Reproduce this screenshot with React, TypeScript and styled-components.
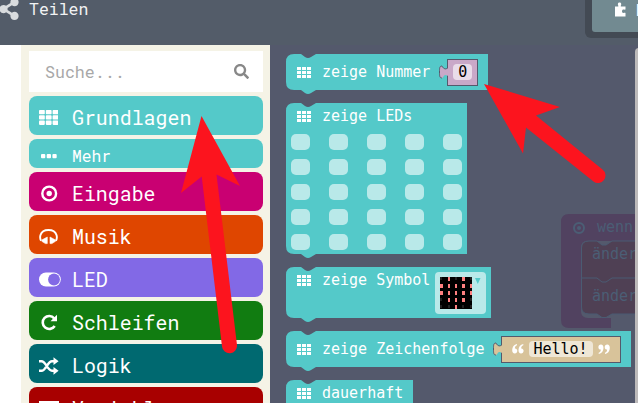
import React from 'react';
import styled, { createGlobalStyle } from 'styled-components';
import { FaShareAlt, FaSearch } from 'react-icons/fa';

const mono = '"DejaVu Sans Mono", "Liberation Mono", monospace';
const uiMono = '"Roboto Mono", "DejaVu Sans Mono", monospace';
const teal = '#54c9c9';

const GlobalStyle = createGlobalStyle`
  * { box-sizing: border-box; }
  body { margin: 0; overflow: hidden; background: #fff; }
  svg { display: block; }
`;

const Page = styled.div`
  position: relative;
  width: 638px;
  height: 403px;
  overflow: hidden;
  display: flex;
  flex-direction: column;
`;

const Header = styled.header`
  height: 45px;
  flex: none;
  display: flex;
  justify-content: space-between;
  align-items: flex-start;
  background: #535c69;
  color: #e2e4e7;
  overflow: hidden;
`;

const ShareButton = styled.div`
  display: flex;
  align-items: center;
  gap: 9px;
  height: 18px;
  font: 16.5px/18px ${uiMono};
  color: #f2f3f4;
  svg { margin-left: -2px; color: #d9dcde; }
`;

const EditorToggle = styled.div`
  width: 53px;
  height: 38px;
  padding: 0 0 6px 7px;
  background: #434a54;
  border-bottom-left-radius: 6px;
`;

const ToggleItem = styled.div`
  height: 32px;
  display: flex;
  gap: 9px;
  padding: 1px 0 0 22px;
  background: #728a91;
  border-bottom-left-radius: 3px;
  color: #fff;
  overflow: hidden;
  font: bold 17px/17px ${uiMono};
  svg { flex: none; margin-top: 1px; }
`;

const Main = styled.main`
  flex: 1;
  min-height: 0;
  display: flex;
  padding-left: 21px;
`;

const Toolbox = styled.nav`
  width: 249px;
  flex: none;
  display: flex;
  flex-direction: column;
  gap: 4px;
  padding: 6px 7px 0 8px;
  background: #f5f3e6;
  overflow: hidden;
`;

const SearchField = styled.div`
  height: 41px;
  flex: none;
  display: flex;
  align-items: center;
  justify-content: space-between;
  padding: 0 14px 0 16px;
  background: #fff;
  color: #a8a8a8;
  font: 16.6px/20px ${uiMono};
  svg { color: #888; }
`;

const Category = styled.div<{ $color: string; $small?: boolean }>`
  height: ${p => (p.$small ? 29 : 39)}px;
  flex: none;
  display: flex;
  align-items: center;
  padding-top: ${p => (p.$small ? 4 : 3)}px;
  border-radius: 8px;
  background: ${p => p.$color};
  color: #fff;
  font: ${p => (p.$small ? 16.3 : 19.9)}px/24px ${uiMono};
`;

const CategoryIcon = styled.span`
  width: 43px;
  flex: none;
  display: flex;
  padding: 1px 0 0 10px;
`;

const Workspace = styled.section`
  position: relative;
  flex: 1;
  background: #54596c;
  overflow: hidden;
`;

const Flyout = styled.div`
  position: relative;
  display: flex;
  flex-direction: column;
  align-items: flex-start;
  gap: 13px;
  padding: 9px 0 0 16px;
`;

const BlockBody = styled.div<{ $w: number; $h: number }>`
  position: relative;
  width: ${p => p.$w}px;
  height: ${p => p.$h}px;
  flex: none;
`;

const BlockShape = styled.svg`
  position: absolute;
  inset: 0;
  overflow: visible;
`;

const BlockRow = styled.div<{ $h: number }>`
  position: relative;
  height: ${p => p.$h}px;
  padding-left: 11px;
  display: flex;
  align-items: center;
  color: #fff;
  font: 15px/20px ${mono};
  white-space: pre;
`;

const BlockLabel = styled.span`
  margin-left: 11px;
`;

const ValueInput = styled.div<{ $gap: number }>`
  display: flex;
  align-items: center;
  margin-left: ${p => p.$gap}px;
`;

const ValueTab = styled.svg`
  position: relative;
  z-index: 1;
  margin-right: -1px;
`;

const ValueBox = styled.div<{ $w: number; $color: string }>`
  width: ${p => p.$w}px;
  height: 27px;
  display: flex;
  align-items: center;
  justify-content: center;
  gap: 5px;
  border: 1px solid #54596c;
  background: ${p => p.$color};
`;

const Field = styled.span<{ $w: number }>`
  width: ${p => p.$w}px;
  height: 16px;
  border-radius: 4px;
  background: rgba(255, 255, 255, 0.6);
  color: #000;
  text-align: center;
  line-height: 17px;
`;

const LedGrid = styled.div`
  position: relative;
  display: grid;
  grid-template-columns: repeat(5, 19px);
  grid-auto-rows: 16px;
  gap: 9px 19px;
  padding: 5px 0 0 5px;
`;

const Led = styled.i`
  border-radius: 5px;
  background: #b9e9e9;
`;

const SymbolField = styled.div`
  align-self: flex-start;
  width: 51px;
  height: 42px;
  display: flex;
  gap: 3px;
  margin: 5px 0 0 5px;
  padding: 5px;
  border-radius: 4px;
  background: #b9e9e9;
`;

const SymbolRow = styled(BlockRow)`
  align-items: flex-start;
  > svg { margin-top: 8px; }
  ${BlockLabel} { margin-top: 3px; }
`;

const GhostBlock = styled.div`
  position: absolute;
  left: 291px;
  top: 169px;
  width: 80px;
  height: 120px;
  color: #4b5e75;
  font: 15px/20px ${mono};
`;

const GhostLines = styled.div`
  position: relative;
  display: flex;
  flex-direction: column;
  padding: 3px 0 0 31px;
`;

const GhostLine = styled.div<{ $indent?: number; $gap?: number }>`
  padding-left: ${p => p.$indent || 0}px;
  margin-top: ${p => p.$gap || 0}px;
  white-space: pre;
`;

const Scrollbar = styled.div`
  position: absolute;
  left: 365px;
  top: 3px;
  width: 8px;
  height: 380px;
  border-radius: 4px 4px 0 0;
  background: #bdbaba;
`;

const Arrows = styled.svg`
  position: absolute;
  inset: 0;
  pointer-events: none;
`;

const GridIcon = ({ w, h, gap, r = 0 }: { w: number; h: number; gap: number; r?: number }) => (
  <svg width={w * 3 + gap * 2} height={h * 3 + gap * 2} fill="#fff">
    {[0, 1, 2].flatMap(y => [0, 1, 2].map(x => (
      <rect key={`${x}-${y}`} x={x * (w + gap)} y={y * (h + gap)} width={w} height={h} rx={r} />
    )))}
  </svg>
);

const DotsIcon = () => (
  <svg width="18" height="5" fill="#fff">
    {[2, 7.7, 13.4].map(x => <rect key={x} x={x} width="4.3" height="4.3" rx="1" />)}
  </svg>
);

const PuzzleIcon = () => (
  <svg width="13" height="15" viewBox="0 0 13 15">
    <path d="M1 4.500H4.300C4.600 3.500 3.600 3 3.900 1.700C4.200 .2 6.900 .2 7.200 1.700C7.500 3 6.500 3.500 6.800 4.500H11.500V7.500C10.500 8 9.500 7 8.600 7.800C7.800 8.500 7.800 10 8.600 10.700C9.500 11.400 10.500 10.300 11.500 10.900V14.500H1Z" fill="#fff" />
  </svg>
);

const TargetIcon = () => (
  <svg width="19" height="17" viewBox="0 0 19 17">
    <circle cx="10.200" cy="8.500" r="6.900" fill="none" stroke="#fff" strokeWidth="2.400" />
    <circle cx="10.200" cy="8.500" r="2.700" fill="#fff" />
  </svg>
);

const ToggleIcon = () => (
  <svg width="22" height="15" viewBox="0 0 22 15">
    <rect x="0" y=".6" width="21.800" height="13.800" rx="6.900" fill="#fff" />
    <circle cx="15" cy="7.500" r="5.900" fill="#8269e6" />
  </svg>
);

const HeadphonesIcon = () => (
  <svg width="19" height="17" viewBox="0 0 19 17">
    <path d="M2 12.800C.8 10.500 1.200 8 1.500 7C3.500 .3 15.500 .3 17.500 7C17.800 8 18.200 10.500 17 12.800" fill="none" stroke="#fff" strokeWidth="1.900" />
    <path d="M8.300 9V15.600H6.400L2.800 13.300V12zM11 9V15.600H12.900L16.500 13.300V12z" fill="#fff" strokeLinejoin="round" stroke="#fff" strokeWidth=".6" />
  </svg>
);

const RepeatIcon = () => (
  <svg width="20" height="17" viewBox="0 0 20 17">
    <path d="M15.200 4.300A6.500 6.500 0 1 0 15.700 12" fill="none" stroke="#fff" strokeWidth="2.600" />
    <path d="M18 .8v6.500h-6.500z" fill="#fff" />
  </svg>
);

const ShuffleIcon = () => (
  <svg width="20" height="18" viewBox="0 0 20 18">
    <path d="M0 4.200H2.500C6.800 4.200 8.600 13.800 13 13.800H15.500M0 13.800H2.500C6.800 13.800 8.600 4.200 13 4.200H15.500" fill="none" stroke="#fff" strokeWidth="2.400" />
    <path d="M14.500 .3L19.600 4.200L14.500 8.100ZM14.500 9.900L19.600 13.800L14.500 17.700Z" fill="#fff" />
  </svg>
);

const ListIcon = () => (
  <svg width="20" height="16" fill="#fff">
    <path d="M0 0h20v3H0zM0 6h20v3H0zM0 12h20v3H0z" />
  </svg>
);

const QuoteIcon = ({ close }: { close?: boolean }) => (
  <svg width="12" height="10" viewBox="0 0 12 10">
    <g fill="#fff" transform={close ? 'rotate(180 6 5)' : undefined}>
      <path d="M5 0V1.200C3.500 1.800 2.800 3 2.900 4.400C4.300 4.300 5.300 5.300 5.300 6.800C5.300 8.400 4.300 9.500 2.800 9.500C1 9.500 .2 8 .2 6C.2 3 2 .6 5 0Z" />
      <path d="M11.300 0V1.200C9.800 1.800 9.100 3 9.200 4.400C10.600 4.300 11.600 5.300 11.600 6.800C11.600 8.400 10.600 9.500 9.100 9.500C7.300 9.500 6.500 8 6.500 6C6.500 3 8.300 .6 11.300 0Z" />
    </g>
  </svg>
);

const blockPath = (w: number, h: number) =>
  `M0 8Q0 0 8 0H15L19 3Q22 5 25 3L30 0H${w}V${h}H30L25 ${h + 3}Q22 ${h + 5} 19 ${h + 3}L15 ${h}H8Q0 ${h} 0 ${h - 8}Z`;

const Block = ({ w, h, children }: { w: number; h: number; children: React.ReactNode }) => (
  <BlockBody $w={w} $h={h}>
    <BlockShape width={w} height={h}><path d={blockPath(w, h)} fill={teal} /></BlockShape>
    {children}
  </BlockBody>
);

const BlockIcon = () => <GridIcon w={4} h={3} gap={1} />;

const Tab = ({ color }: { color: string }) => (
  <ValueTab width="9" height="16" viewBox="0 0 9 16">
    <path d="M9 4C6 7 4 4 3 2C.5 2 .5 4 .5 8S.5 14 3 14C5 14 4 9 9 12Z" fill={color} />
    <path d="M8.5 4C6 6 4 4 3 2C.5 2 .5 4 .5 8S.5 14 3 14" fill="none" stroke="#54596c" />
  </ValueTab>
);

const heart = ['.#.#.', '#####', '#####', '.###.', '..#..'];
const columns = [0, 8, 15, 22, 30];

const SymbolPreview = () => (
  <svg width="32" height="32">
    <rect width="32" height="32" fill="#000" />
    {heart.flatMap((row, y) => row.split('').map((c, x) => {
      const lit = c === '#';
      const width = x === 0 || x === 3 ? 3 : 2;
      return <rect key={`${x}-${y}`} x={columns[x]} y={y * 7} width={lit ? width : 2} height={lit ? 4 : 3} fill={lit ? '#ff8080' : '#202020'} />;
    }))}
  </svg>
);

const categories = [
  { name: 'Eingabe', color: '#c90072', icon: <TargetIcon /> },
  { name: 'Musik', color: '#df4600', icon: <HeadphonesIcon /> },
  { name: 'LED', color: '#8269e6', icon: <ToggleIcon /> },
  { name: 'Schleifen', color: '#117c11', icon: <RepeatIcon /> },
  { name: 'Logik', color: '#006970', icon: <ShuffleIcon /> },
  { name: 'Variablen', color: '#a80000', icon: <ListIcon /> },
];

export default function App() {
  return (
    <Page>
      <GlobalStyle />
      <Header>
        <ShareButton><FaShareAlt size={22} />Teilen</ShareButton>
        <EditorToggle><ToggleItem><PuzzleIcon />Blöcke</ToggleItem></EditorToggle>
      </Header>
      <Main>
        <Toolbox>
          <SearchField>Suche...<FaSearch size={15} /></SearchField>
          <Category $color={teal}><CategoryIcon><GridIcon w={5.8} h={4.3} gap={1} r={0.8} /></CategoryIcon>Grundlagen</Category>
          <Category $color={teal} $small><CategoryIcon><DotsIcon /></CategoryIcon>Mehr</Category>
          {categories.map(c => (
            <Category key={c.name} $color={c.color}><CategoryIcon>{c.icon}</CategoryIcon>{c.name}</Category>
          ))}
        </Toolbox>
        <Workspace>
          <GhostBlock>
            <BlockShape width="80" height="120">
              <path d="M0 8Q0 0 8 0H80V27H26Q20 27 20 34V97Q20 104 27 104H50V114H8Q0 114 0 106Z" fill="#514260" />
              <path d="M20.5 34Q20.5 27 28 27H36L41 31H45L51 27H80V100H51L45 103.500H41L36 100H28Q20.500 100 20.500 93Z" fill="#4f4054" stroke="#4b5b72" />
              <path d="M20 64H36L41 68H45L51 64H80" fill="none" stroke="#4b5b72" />
              <circle cx="18" cy="14" r="5" fill="none" stroke="#4b5e75" strokeWidth="2" />
              <circle cx="18" cy="14" r="2" fill="#4b5e75" />
            </BlockShape>
            <GhostLines>
              <GhostLine $indent={5}>wenn</GhostLine>
              <GhostLine $gap={7}>änder</GhostLine>
              <GhostLine $gap={22}>änder</GhostLine>
            </GhostLines>
          </GhostBlock>
          <Flyout>
            <Block w={202} h={36}>
              <BlockRow $h={36}>
                <BlockIcon /><BlockLabel>zeige Nummer</BlockLabel>
                <ValueInput $gap={9}>
                  <Tab color="#c9a8c8" />
                  <ValueBox $w={31} $color="#c9a8c8"><Field $w={19}>0</Field></ValueBox>
                </ValueInput>
              </BlockRow>
            </Block>
            <Block w={181} h={151}>
              <BlockRow $h={26}><BlockIcon /><BlockLabel>zeige LEDs</BlockLabel></BlockRow>
              <LedGrid>{Array.from({ length: 25 }, (_, i) => <Led key={i} />)}</LedGrid>
            </Block>
            <Block w={205} h={51}>
              <SymbolRow $h={51}>
                <BlockIcon /><BlockLabel>zeige Symbol</BlockLabel>
                <SymbolField>
                  <SymbolPreview />
                  <svg width="6" height="8"><path d="M0 1h5.500L2.800 7z" fill={teal} /></svg>
                </SymbolField>
              </SymbolRow>
            </Block>
            <Block w={345} h={36}>
              <BlockRow $h={36}>
                <BlockIcon /><BlockLabel>zeige Zeichenfolge</BlockLabel>
                <ValueInput $gap={8}>
                  <Tab color="#d8c39a" />
                  <ValueBox $w={120} $color="#d8c39a">
                    <QuoteIcon /><Field $w={64}>Hello!</Field><QuoteIcon close />
                  </ValueBox>
                </ValueInput>
              </BlockRow>
            </Block>
            <Block w={127} h={36}>
              <BlockRow $h={26}><BlockIcon /><BlockLabel>dauerhaft</BlockLabel></BlockRow>
            </Block>
          </Flyout>
          <Scrollbar />
        </Workspace>
      </Main>
      <Arrows width="638" height="403" fill="#fc141e">
        <path d="M201.500 116L240 186L216.500 174.500L237 345A7.500 7.500 0 0 1 222 346.500L201.700 176.500L181 193Z" />
        <path d="M484 84L560 107L536 115.500L602.500 169.500A7.500 7.500 0 0 1 593.500 181.500L526 127.500L523 153.500Z" />
      </Arrows>
    </Page>
  );
}
